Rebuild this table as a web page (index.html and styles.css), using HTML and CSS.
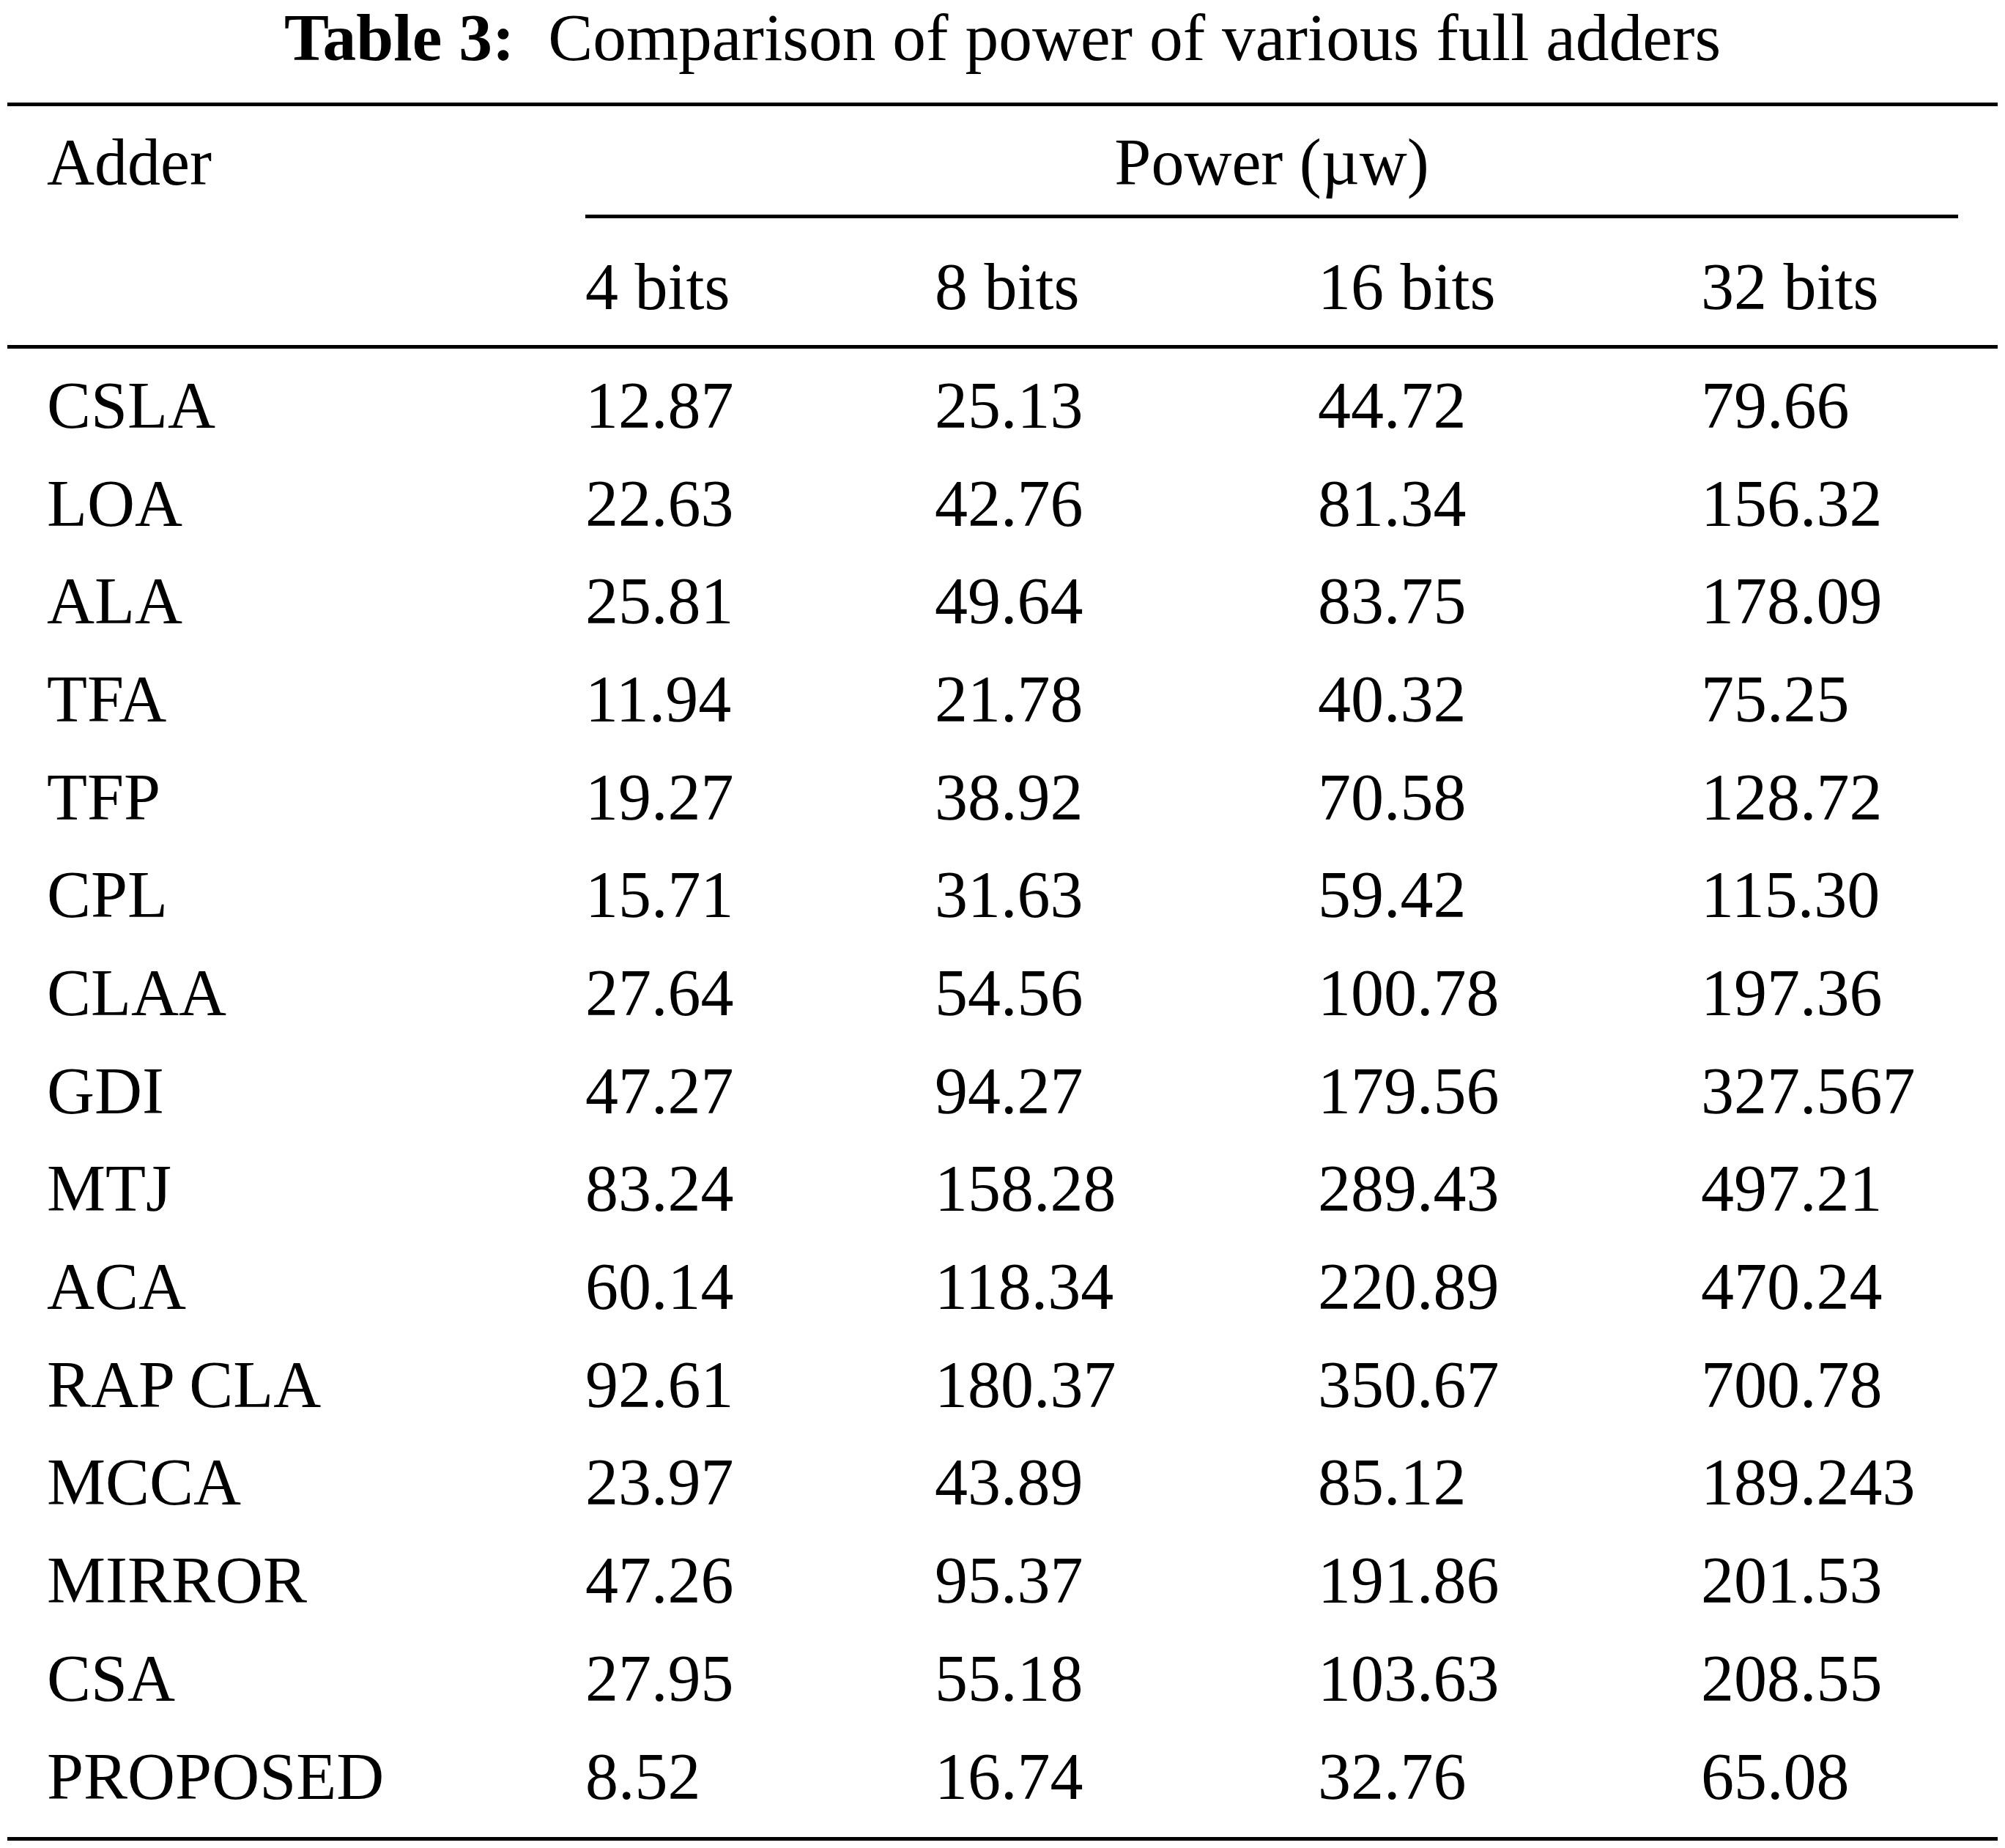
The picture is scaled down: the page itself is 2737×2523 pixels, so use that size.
FILE: index.html
```html
<!DOCTYPE html>
<html lang="en">
<head>
<meta charset="utf-8">
<title>Table 3: Comparison of power of various full adders</title>
<link rel="stylesheet" href="styles.css">
</head>
<body>
<div class="page">
  <h1 class="caption"><b>Table 3:</b>&nbsp; Comparison of power of various full adders</h1>
  <div class="table">
    <div class="thead">
      <div class="cell adder-h">Adder</div>
      <div class="cell power-h">Power (µw)</div>
      <div class="cmid"></div>
      <div class="cell sub"></div>
      <div class="cell sub">4 bits</div>
      <div class="cell sub">8 bits</div>
      <div class="cell sub">16 bits</div>
      <div class="cell sub">32 bits</div>
    </div>
    <div class="tbody">
      <div class="cell">CSLA</div><div class="cell">12.87</div><div class="cell">25.13</div><div class="cell">44.72</div><div class="cell">79.66</div>
      <div class="cell">LOA</div><div class="cell">22.63</div><div class="cell">42.76</div><div class="cell">81.34</div><div class="cell">156.32</div>
      <div class="cell">ALA</div><div class="cell">25.81</div><div class="cell">49.64</div><div class="cell">83.75</div><div class="cell">178.09</div>
      <div class="cell">TFA</div><div class="cell">11.94</div><div class="cell">21.78</div><div class="cell">40.32</div><div class="cell">75.25</div>
      <div class="cell">TFP</div><div class="cell">19.27</div><div class="cell">38.92</div><div class="cell">70.58</div><div class="cell">128.72</div>
      <div class="cell">CPL</div><div class="cell">15.71</div><div class="cell">31.63</div><div class="cell">59.42</div><div class="cell">115.30</div>
      <div class="cell">CLAA</div><div class="cell">27.64</div><div class="cell">54.56</div><div class="cell">100.78</div><div class="cell">197.36</div>
      <div class="cell">GDI</div><div class="cell">47.27</div><div class="cell">94.27</div><div class="cell">179.56</div><div class="cell">327.567</div>
      <div class="cell">MTJ</div><div class="cell">83.24</div><div class="cell">158.28</div><div class="cell">289.43</div><div class="cell">497.21</div>
      <div class="cell">ACA</div><div class="cell">60.14</div><div class="cell">118.34</div><div class="cell">220.89</div><div class="cell">470.24</div>
      <div class="cell">RAP CLA</div><div class="cell">92.61</div><div class="cell">180.37</div><div class="cell">350.67</div><div class="cell">700.78</div>
      <div class="cell">MCCA</div><div class="cell">23.97</div><div class="cell">43.89</div><div class="cell">85.12</div><div class="cell">189.243</div>
      <div class="cell">MIRROR</div><div class="cell">47.26</div><div class="cell">95.37</div><div class="cell">191.86</div><div class="cell">201.53</div>
      <div class="cell">CSA</div><div class="cell">27.95</div><div class="cell">55.18</div><div class="cell">103.63</div><div class="cell">208.55</div>
      <div class="cell">PROPOSED</div><div class="cell">8.52</div><div class="cell">16.74</div><div class="cell">32.76</div><div class="cell">65.08</div>
    </div>
  </div>
</div>
</body>
</html>
```

FILE: styles.css
```css
html, body {
  margin: 0;
  padding: 0;
  background: #ffffff;
}

body {
  font-family: "Liberation Serif", "Times New Roman", serif;
  color: #000000;
}

.page {
  width: 2717px;
  margin: 0 10px;
}

.caption {
  margin: 0 0 38px 0;
  font-size: 91.5px;
  font-weight: normal;
  line-height: 102px;
  text-align: center;
  white-space: nowrap;
}

.caption b {
  font-weight: bold;
}

.table {
  display: flex;
  flex-direction: column;
  border-top: 5px solid #000;
  border-bottom: 5px solid #000;
  font-size: 90px;
}

.thead,
.tbody {
  display: grid;
  grid-template-columns: 735px 477px 523px 523px 459px;
}

.thead {
  border-bottom: 5px solid #000;
}

.cell {
  padding: 0 0 0 54px;
  line-height: 133.7px;
  height: 133.7px;
  white-space: nowrap;
}

.adder-h {
  grid-column: 1;
  grid-row: 1;
  padding-top: 10px;
}

.power-h {
  grid-column: 2 / 6;
  grid-row: 1;
  padding: 10px 0 0 0;
  text-align: center;
  margin: 0 54px;
}

.cmid {
  grid-column: 2 / 6;
  grid-row: 2;
  margin: 4px 54px 0 54px;
  height: 5px;
  background: #000;
}

.sub {
  grid-row: 3;
  padding-top: 27px;
  padding-bottom: 12.5px;
}

.tbody {
  grid-auto-rows: 133.7px;
  padding: 11px 0 15.5px 0;
}
```
